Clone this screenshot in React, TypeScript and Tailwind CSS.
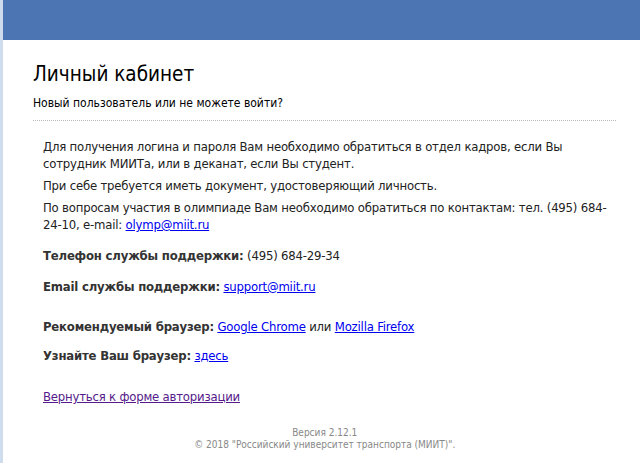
import React from "react";

export default function App() {
  const font = { fontFamily: 'Tahoma, "DejaVu Sans Condensed", "Liberation Sans", sans-serif' };
  return (
    <div className="min-h-[463px] w-[640px] bg-white flex" style={font}>
      <div className="w-[3px] bg-[#cfdcee] shrink-0" />
      <div className="flex-1 flex flex-col">
        <div className="h-[40px] bg-[#4b76b3]" />
        <div className="pl-[30px] pr-[24px]">
          <h1 className="text-[20.5px] leading-[25px] text-black mt-[22px]">Личный кабинет</h1>
          <p className="text-[12px] leading-[15px] text-black mt-[9px]">Новый пользователь или не можете войти?</p>
          <div className="mt-[9px] border-t border-dotted border-[#b8b8b8]" />
          <div className="px-[10px] pt-[17px] text-[13px] leading-[17px] tracking-[-0.2px] text-[#222] whitespace-nowrap">
            <p>
              Для получения логина и пароля Вам необходимо обратиться в отдел кадров, если Вы
              <br />
              сотрудник МИИТа, или в деканат, если Вы студент.
            </p>
            <p className="mt-[5px]">При себе требуется иметь документ, удостоверяющий личность.</p>
            <p className="mt-[5px]">
              По вопросам участия в олимпиаде Вам необходимо обратиться по контактам: тел. (495) 684-
              <br />
              24-10, e-mail: <a className="text-[#0000ee] underline" href="#">olymp@miit.ru</a>
            </p>
            <p className="mt-[14px]">
              <b className="text-[#333]">Телефон службы поддержки:</b> (495) 684-29-34
            </p>
            <p className="mt-[14px]">
              <b className="text-[#333]">Email службы поддержки:</b>{" "}
              <a className="text-[#0000ee] underline" href="#">support@miit.ru</a>
            </p>
            <p className="mt-[23px]">
              <b className="text-[#333]">Рекомендуемый браузер:</b>{" "}
              <a className="text-[#0000ee] underline" href="#">Google Chrome</a> или{" "}
              <a className="text-[#0000ee] underline" href="#">Mozilla Firefox</a>
            </p>
            <p className="mt-[12px]">
              <b className="text-[#333]">Узнайте Ваш браузер:</b>{" "}
              <a className="text-[#0000ee] underline" href="#">здесь</a>
            </p>
            <p className="mt-[24px]">
              <a className="text-[#551a8b] underline" href="#">Вернуться к форме авторизации</a>
            </p>
          </div>
          <div className="mt-[22px] text-center text-[10px] leading-[12px] text-[#888]">
            <div>Версия 2.12.1</div>
            <div>© 2018 "Российский университет транспорта (МИИТ)".</div>
          </div>
        </div>
      </div>
    </div>
  );
}
